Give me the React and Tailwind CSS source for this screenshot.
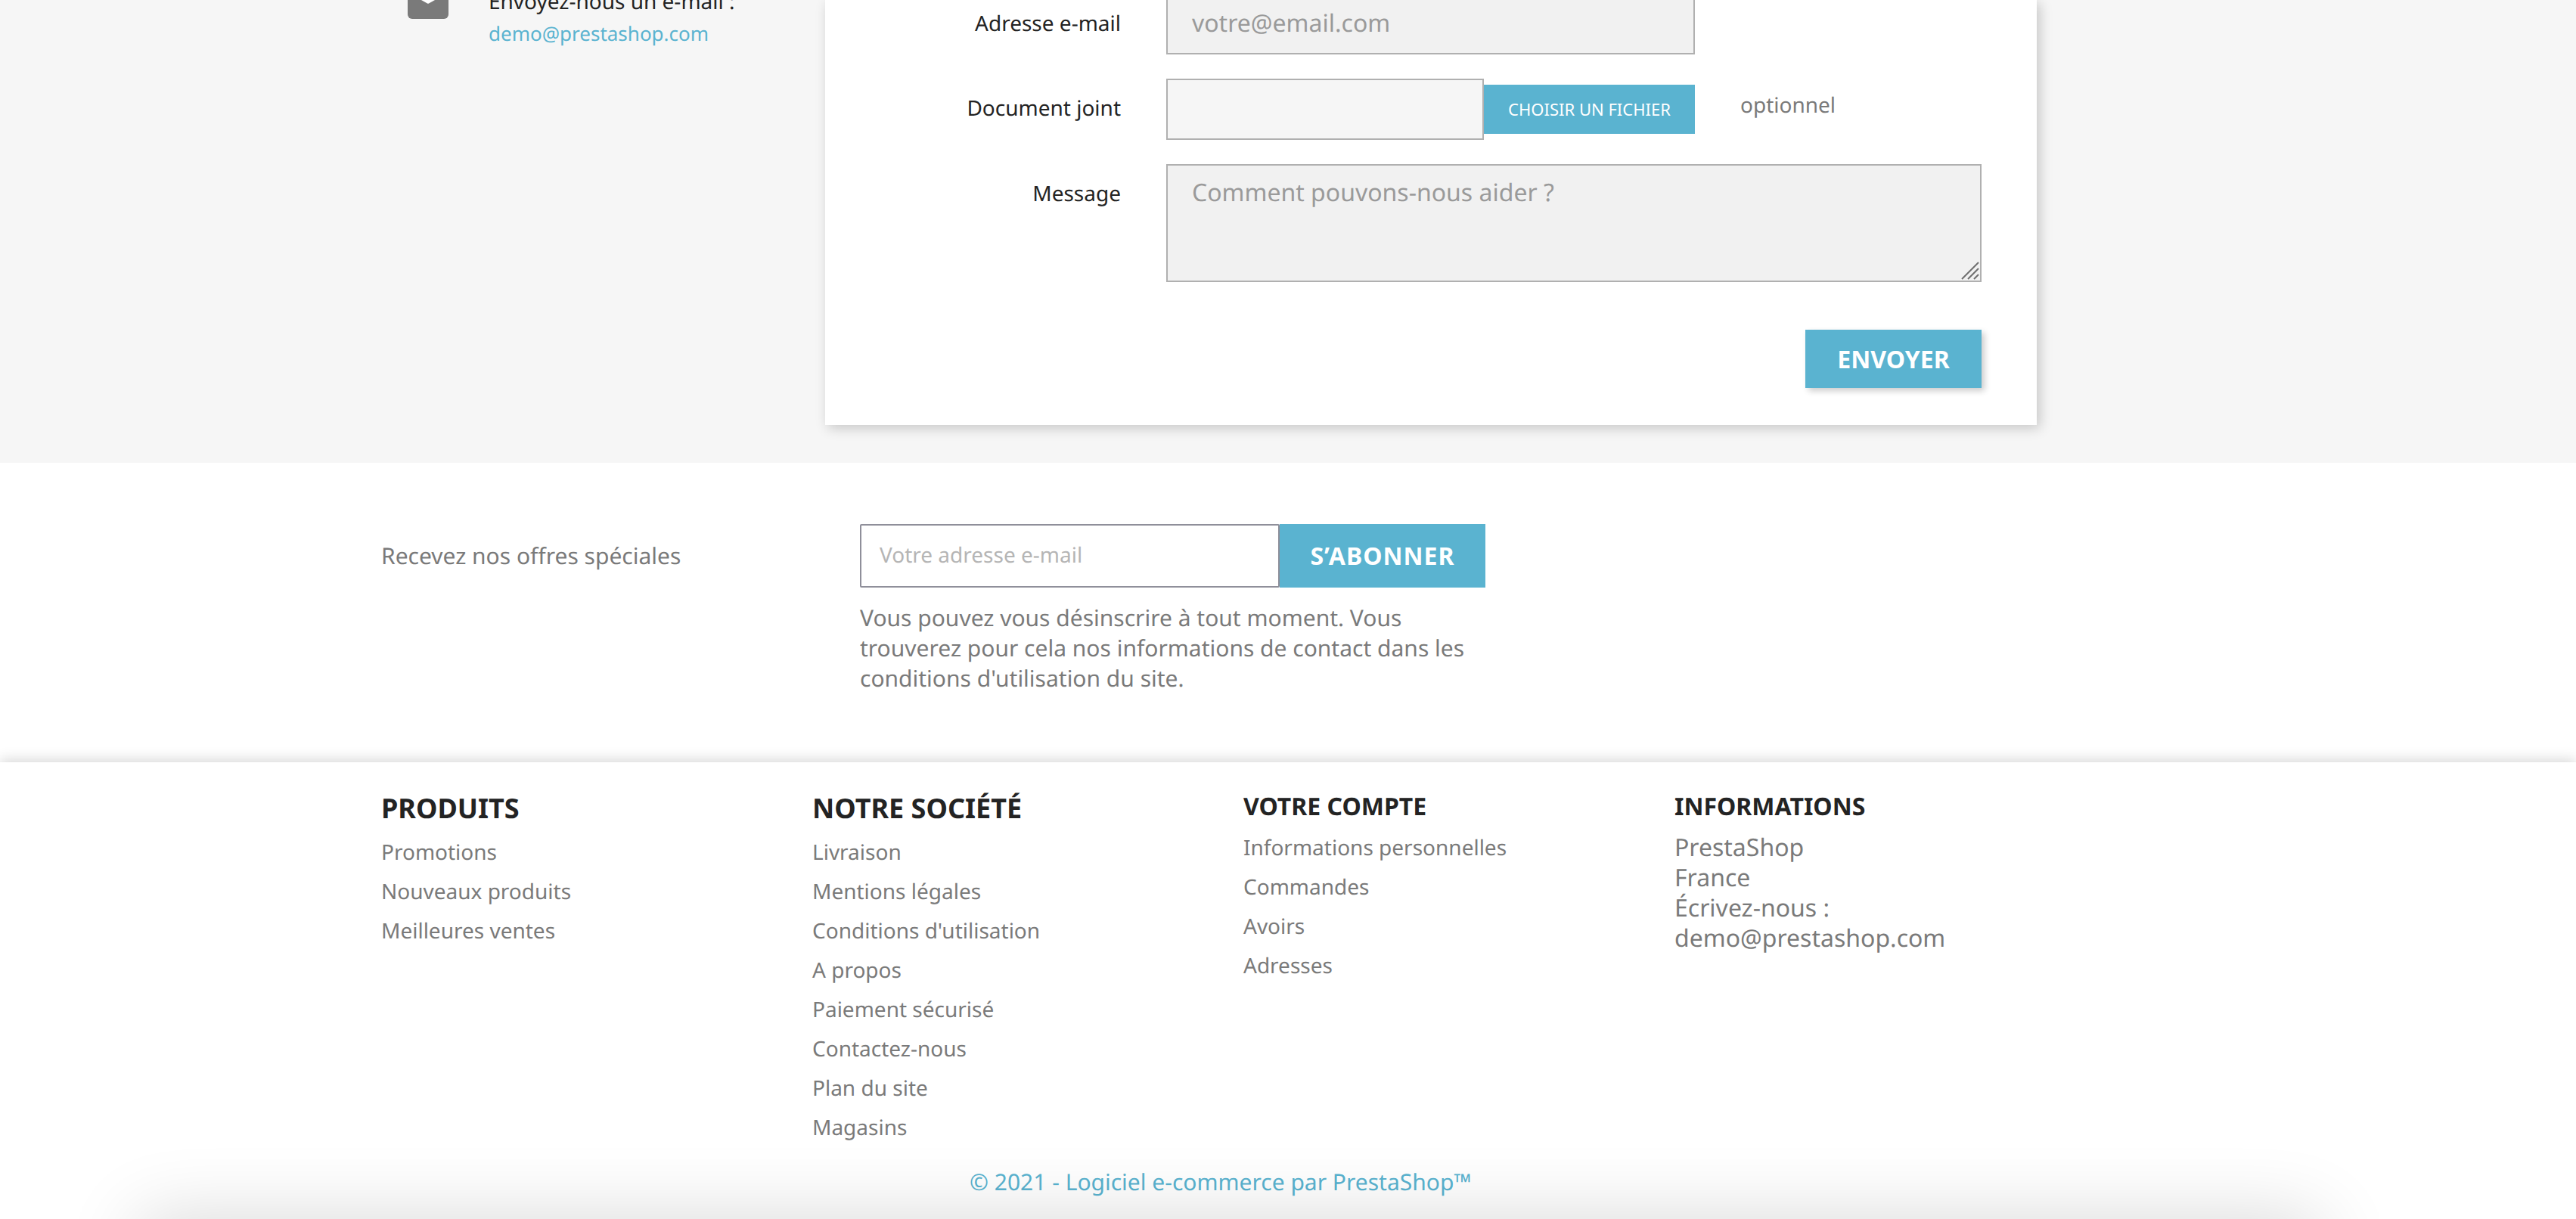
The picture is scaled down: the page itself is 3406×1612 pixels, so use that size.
const font = { fontFamily: '"Noto Sans", sans-serif' };

function FooterList({ items, className }) {
  return (
    <ul className={className}>
      {items.map((t, i) => (
        <li key={i} className="h-[52px] text-[28px] leading-[52px] text-[#7a7a7a] whitespace-nowrap">{t}</li>
      ))}
    </ul>
  );
}

export default function App() {
  return (
    <div className="h-[1612px] w-full overflow-hidden bg-white [text-rendering:geometricPrecision]" style={font}>
      <section className="h-[612px] bg-[#f6f6f6] flex items-start">
        <aside className="w-[1091px] shrink-0 pl-[539px] flex items-start -mt-[40px]">
          <div className="w-[54px] h-[65px] shrink-0 rounded-[6px] bg-[#7a7a7a] flex justify-center pt-[26px] overflow-hidden">
            <svg width="54" height="24" viewBox="0 0 54 24" fill="#fff" className="shrink-0"><path d="M0 4 H54 L28 18.500 Q27 19 26 18.500 Z" /></svg>
          </div>
          <div className="ml-[53px] pt-[20px]">
            <div className="text-[28px] leading-[44px] text-[#232323] whitespace-nowrap h-[42px]">Envoyez-nous un e-mail :</div>
            <div className="text-[26px] leading-[44px] text-[#5ab3d0] whitespace-nowrap">demo@prestashop.com</div>
          </div>
        </aside>
        <main className="w-[1602px] h-[562px] shrink-0 bg-white shadow-[4px_4px_16px_rgba(0,0,0,0.2)] pr-[73px]">
          <div className="flex items-center h-[72px]">
            <label className="w-[391px] text-right text-[28px] text-[#232323] leading-[64px] -mt-[10px]">Adresse e-mail</label>
            <div className="ml-[60px] w-[699px] h-[80px] -mt-[8px] self-end border-2 border-[#b0b0b0] bg-[#f1f1f1] pl-[32px] text-[32px] leading-[62px] text-[#9a9a9a] flex items-end pb-[8px]">votre@email.com</div>
          </div>
          <div className="flex items-center mt-[32px] h-[81px]">
            <label className="w-[391px] text-right text-[28px] text-[#232323] -mt-[3px]">Document joint</label>
            <div className="ml-[60px] w-[420px] h-[81px] border-2 border-[#b0b0b0] bg-[#f6f6f6]"></div>
            <button className="w-[279px] h-[65px] bg-[#5ab3d0] text-white text-[22px] uppercase">Choisir un fichier</button>
            <span className="ml-[60px] text-[28px] text-[#7a7a7a] -mt-[12px]">optionnel</span>
          </div>
          <div className="flex items-start mt-[32px]">
            <label className="w-[391px] text-right text-[28px] text-[#232323] pt-[18px]">Message</label>
            <div className="relative ml-[60px] w-[1078px] h-[156px] border-2 border-[#b0b0b0] bg-[#f1f1f1] pl-[32px] pt-[14px] text-[32px] leading-[44px] text-[#9a9a9a]">
              Comment pouvons-nous aider ?
              <svg className="absolute right-0 bottom-0" width="26" height="26" viewBox="0 0 26 26" stroke="#6e6e6e" strokeWidth="2" fill="none">
                <path d="M2 24 L24 2 M10 24 L24 10 M18 24 L24 18" />
              </svg>
            </div>
          </div>
          <div className="flex justify-end mt-[63px]">
            <button className="w-[233px] h-[77px] bg-[#5ab3d0] text-white text-[32px] font-bold uppercase shadow-[4px_4px_8px_rgba(0,0,0,0.2)]">Envoyer</button>
          </div>
        </main>
      </section>

      <section className="h-[396px] bg-white flex pt-[81px] pl-[504px]">
        <p className="w-[633px] text-[30px] leading-[84px] text-[#7a7a7a] shrink-0">Recevez nos offres spéciales</p>
        <div className="w-[828px]">
          <div className="flex h-[84px]">
            <div className="w-[555px] h-[84px] rounded-[2px] border-2 border-[#8f8f9a] text-[#b5b5b5] text-[28px] pl-[24px] leading-[78px]">Votre adresse e-mail</div>
            <button className="w-[272px] bg-[#5ab3d0] text-white text-[32px] font-bold uppercase tracking-[1px]">S’abonner</button>
          </div>
          <p className="mt-[20px] text-[30px] leading-[40px] text-[#7a7a7a]">Vous pouvez vous désinscrire à tout moment. Vous trouverez pour cela nos informations de contact dans les conditions d'utilisation du site.</p>
        </div>
      </section>

      <footer className="relative bg-white h-[604px] pl-[504px] flex pt-[34px] shadow-[0_-4px_16px_rgba(0,0,0,0.15)]">
        <div className="w-[570px]">
          <h4 className="text-[36px] leading-[52px] font-bold text-[#232323] pt-[1px]">PRODUITS</h4>
          <FooterList className="mt-[6px]" items={["Promotions", "Nouveaux produits", "Meilleures ventes"]} />
        </div>
        <div className="w-[570px]">
          <h4 className="text-[36px] leading-[52px] font-bold text-[#232323] pt-[1px]">NOTRE SOCIÉTÉ</h4>
          <FooterList className="mt-[6px]" items={["Livraison", "Mentions légales", "Conditions d'utilisation", "A propos", "Paiement sécurisé", "Contactez-nous", "Plan du site", "Magasins"]} />
          <div className="mt-[20px] w-[900px] text-[30px] text-[#5ab3d0] leading-[52px] pl-[208px]">© 2021 - Logiciel e-commerce par PrestaShop™</div>
        </div>
        <div className="w-[570px]">
          <h4 className="text-[32px] leading-[48px] font-bold text-[#232323] pt-[1px]">VOTRE COMPTE</h4>
          <FooterList className="mt-[4px]" items={["Informations personnelles", "Commandes", "Avoirs", "Adresses"]} />
        </div>
        <div className="w-[570px]">
          <h4 className="text-[32px] leading-[48px] font-bold text-[#232323] pt-[1px]">INFORMATIONS</h4>
          <div className="mt-[10px] text-[32px] leading-[40px] text-[#7a7a7a]">PrestaShop<br />France<br />Écrivez-nous :<br />demo@prestashop.com</div>
        </div>
      </footer>
      <div className="relative ml-[185px] mr-[340px] h-[100px] bg-white shadow-[0_0_100px_rgba(0,0,0,0.16)]"></div>
    </div>
  );
}
